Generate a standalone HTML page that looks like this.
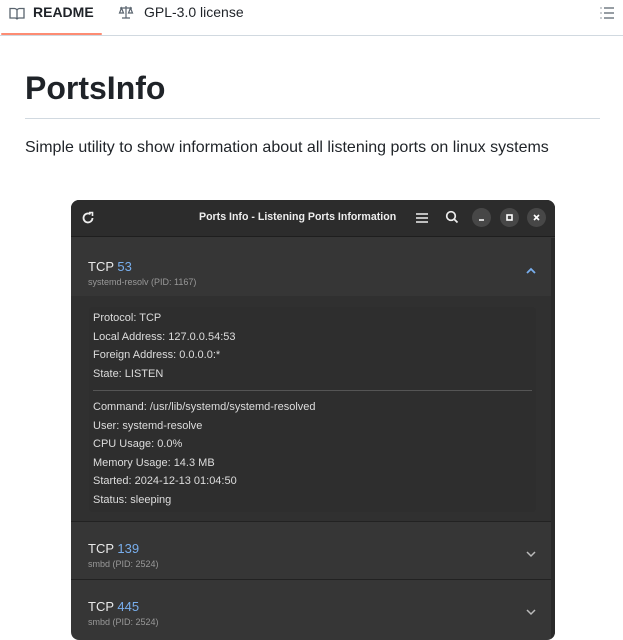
<!DOCTYPE html>
<html><head><style>
*{margin:0;padding:0;box-sizing:border-box}
body{width:623px;height:624px;overflow:hidden;background:#fff;font-family:"Liberation Sans",sans-serif;color:#1f2328;position:relative}
.tabs{position:absolute;left:0;top:0;width:623px;height:36px;border-bottom:1px solid #d1d9e0}
.tab{position:absolute;top:4px;font-size:14px}
.ul{position:absolute;left:1px;top:33px;width:101px;height:2px;background:#fd8c73;border-radius:2px}
h1{position:absolute;left:25px;top:70px;font-size:32px;font-weight:bold}
.hr{position:absolute;left:25px;top:118px;width:575px;height:1px;background:#d1d9e0}
.p{position:absolute;left:25px;top:139px;font-size:16px}
.win{position:absolute;left:71px;top:200px;width:484px;height:440px;background:#363636;border-radius:8px;overflow:hidden;font-family:"Liberation Sans",sans-serif;color:#ddd}
.hb{position:absolute;left:0;top:0;width:484px;height:37px;background:#2c2c2c;border-bottom:1px solid #1e1e1e}
.ttl{position:absolute;left:128px;top:11px;font-size:10.6px;font-weight:bold;color:#eee}
.cb{position:absolute;top:8px;width:19px;height:19px;border-radius:50%;background:#474747}
.t{position:absolute;left:17px;font-size:13px;color:#e8e8e8}
.t b{font-weight:normal;color:#78aeed}
.s{position:absolute;left:17px;font-size:9px;color:#999}
.sep{position:absolute;left:0;width:480px;height:1px;background:#222}
.box{position:absolute;left:18px;top:107px;width:447px;height:205px;background:#2e2e2e;border-radius:4px}
.l{position:absolute;left:22px;font-size:11px;color:#ddd}
.chev{position:absolute;left:455px}
</style></head><body>
<div class="tabs">
<svg style="position:absolute;left:9px;top:6px" width="16" height="16" viewBox="0 0 16 16"><path d="M1 2.5h4.5c1.2 0 2.5 1 2.5 2v9c0-.8-1-1.5-2-1.5H1zM15 2.5h-4.5c-1.2 0-2.5 1-2.5 2v9c0-.8 1-1.5 2-1.5H15z" fill="none" stroke="#59636e" stroke-width="1.3"/></svg>
<div class="tab" style="left:33px;font-weight:bold">README</div>
<svg style="position:absolute;left:118px;top:4px" width="16" height="16" viewBox="0 0 16 16" fill="none" stroke="#59636e" stroke-width="1.2"><path d="M8 2v12M4 14h8M2 4h12M3.5 4L1.5 9h4zM12.5 4l-2 5h4z"/></svg>
<div class="tab" style="left:144px;color:#1f2328">GPL-3.0 license</div>
<svg style="position:absolute;left:599px;top:5px" width="16" height="16" viewBox="0 0 16 16" fill="none" stroke="#59636e" stroke-width="1.3"><path d="M5 3h10M5 8h10M5 13h10M1.5 3h1M1.5 8h1M1.5 13h1"/></svg>
<div class="ul"></div>
</div>
<h1>PortsInfo</h1>
<div class="hr"></div>
<div class="p">Simple utility to show information about all listening ports on linux systems</div>
<div class="win">
<div class="hb">
<svg style="position:absolute;left:10px;top:11px" width="14" height="14" viewBox="0 0 14 14" fill="none" stroke="#eee" stroke-width="1.8"><path d="M11.5 7A4.5 4.5 0 1 1 9.5 3.2"/><path d="M8 1.5h3.5v3.5" stroke-width="1.6"/></svg>
<div class="ttl">Ports Info - Listening Ports Information</div>
<svg style="position:absolute;left:345px;top:12px" width="12" height="12"><path d="M0 2h12M0 6h12M0 10h12" stroke="#eee" stroke-width="1.6"/></svg>
<svg style="position:absolute;left:374px;top:10px" width="14" height="14" fill="none" stroke="#eee" stroke-width="1.7"><circle cx="6" cy="6" r="4.3"/><path d="M9 9l3.5 3.5"/></svg>
<div class="cb" style="left:401px"><svg width="19" height="19"><path d="M7 12h5" stroke="#fff" stroke-width="1.6"/></svg></div>
<div class="cb" style="left:429px"><svg width="19" height="19"><rect x="7" y="7" width="5" height="5" fill="none" stroke="#fff" stroke-width="1.6"/></svg></div>
<div class="cb" style="left:456px"><svg width="19" height="19"><path d="M7 7l5 5M12 7l-5 5" stroke="#fff" stroke-width="1.6"/></svg></div>
</div>
<div class="t" style="top:59px">TCP <b>53</b></div>
<div class="s" style="top:77px">systemd-resolv (PID: 1167)</div>
<svg class="chev" style="top:67px" width="10" height="7"><path d="M1 6l4-4 4 4" fill="none" stroke="#78aeed" stroke-width="1.8"/></svg>
<div style="position:absolute;left:0;top:96px;width:480px;height:225px;background:#303030"></div>
<div class="box"></div>
<div class="l" style="top:112px">Protocol: TCP</div>
<div class="l" style="top:131px">Local Address: 127.0.0.54:53</div>
<div class="l" style="top:149px">Foreign Address: 0.0.0.0:*</div>
<div class="l" style="top:168px">State: LISTEN</div>
<div style="position:absolute;left:22px;top:190px;width:439px;height:1px;background:#555"></div>
<div class="l" style="top:201px">Command: /usr/lib/systemd/systemd-resolved</div>
<div class="l" style="top:220px">User: systemd-resolve</div>
<div class="l" style="top:238px">CPU Usage: 0.0%</div>
<div class="l" style="top:257px">Memory Usage: 14.3 MB</div>
<div class="l" style="top:275px">Started: 2024-12-13 01:04:50</div>
<div class="l" style="top:294px">Status: sleeping</div>
<div class="sep" style="top:321px"></div>
<div class="t" style="top:341px">TCP <b>139</b></div>
<div class="s" style="top:359px">smbd (PID: 2524)</div>
<svg class="chev" style="top:351px" width="10" height="7"><path d="M1 1l4 4 4-4" fill="none" stroke="#bbb" stroke-width="1.5"/></svg>
<div class="sep" style="top:379px"></div>
<div class="t" style="top:399px">TCP <b>445</b></div>
<div class="s" style="top:417px">smbd (PID: 2524)</div>
<svg class="chev" style="top:409px" width="10" height="7"><path d="M1 1l4 4 4-4" fill="none" stroke="#bbb" stroke-width="1.5"/></svg>
<div style="position:absolute;left:480px;top:38px;width:4px;height:402px;background:#2a2a2a"></div>
</div>
</body></html>
